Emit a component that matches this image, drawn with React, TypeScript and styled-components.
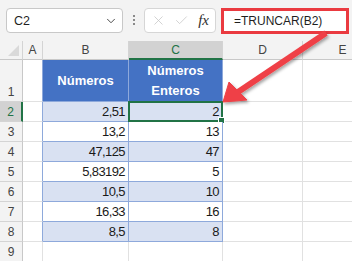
import React from 'react';
import styled, { createGlobalStyle } from 'styled-components';
import { ChevronDown, X, Check } from 'lucide-react';

const GlobalStyle = createGlobalStyle`
  html, body {
    margin: 0;
    padding: 0;
    background: #ffffff;
    overflow: hidden;
  }
  * {
    box-sizing: border-box;
  }
`;

const Page = styled.div`
  position: relative;
  width: 352px;
  height: 261px;
  overflow: hidden;
  font-family: 'Liberation Sans', Arial, sans-serif;
  background: #ffffff;
`;

const FormulaBar = styled.div`
  display: flex;
  align-items: flex-start;
  height: 41px;
  padding: 8px 0 0 6px;
  background: #f3f3f3;
`;

const NameBox = styled.div`
  display: flex;
  align-items: center;
  justify-content: space-between;
  width: 117px;
  height: 25px;
  padding: 0 4px 0 7px;
  background: #ffffff;
  border: 1px solid #c8c8c8;
  border-radius: 4px;
  font-size: 12.5px;
  color: #1f1f1f;
`;

const Grip = styled.div`
  display: flex;
  flex-direction: column;
  gap: 2px;
  margin: 7px 9px 0 10px;

  span {
    width: 2px;
    height: 2px;
    background: #8a8a8a;
  }
`;

const FxBox = styled.div`
  display: flex;
  align-items: center;
  width: 72px;
  height: 25px;
  padding: 0 6px 0 6px;
  gap: 8px;
  background: #ffffff;
  border: 1px solid #d6d6d6;
  border-radius: 4px;
`;

const Fx = styled.span`
  margin-left: auto;
  font-family: 'Liberation Serif', 'Times New Roman', serif;
  font-style: italic;
  font-size: 15px;
  color: #303030;
`;

const FormulaInput = styled.div`
  display: flex;
  align-items: center;
  width: 128px;
  height: 26px;
  margin-left: 5px;
  padding-left: 10px;
  background: #ffffff;
  border: 3px solid #ea3a40;
  font-size: 12px;
  color: #1f1f1f;
`;

const Sheet = styled.div`
  display: grid;
  grid-template-columns: 23px 20px 86px 94px 80px 80px;
  grid-template-rows: 19px 42px repeat(8, 20px);
`;

const ColHead = styled.div<{ $active?: boolean }>`
  display: flex;
  align-items: center;
  justify-content: center;
  font-size: 12px;
  color: ${(p) => (p.$active ? '#217346' : '#444444')};
  background: ${(p) => (p.$active ? '#d2d2d2' : '#f3f3f3')};
  border-right: 1px solid #d4d4d4;
  border-bottom: ${(p) => (p.$active ? '2px solid #217346' : '1px solid #c8c8c8')};
`;

const Corner = styled.div`
  position: relative;
  background: #f3f3f3;
  border-right: 1px solid #d4d4d4;
  border-bottom: 1px solid #c8c8c8;

  &::after {
    content: '';
    position: absolute;
    right: 3px;
    bottom: 3px;
    border-style: solid;
    border-width: 0 0 11px 11px;
    border-color: transparent transparent #d9d9d9 transparent;
  }
`;

const RowHead = styled.div<{ $active?: boolean }>`
  display: flex;
  align-items: flex-end;
  justify-content: center;
  padding-bottom: 2px;
  font-size: 12px;
  color: ${(p) => (p.$active ? '#217346' : '#444444')};
  background: ${(p) => (p.$active ? '#d2d2d2' : '#f3f3f3')};
  border-right: ${(p) => (p.$active ? '2px solid #217346' : '1px solid #c8c8c8')};
  border-bottom: 1px solid #d4d4d4;
`;

const Cell = styled.div<{ $edge?: boolean }>`
  border-right: 1px solid ${(p) => (p.$edge ? '#8ea9db' : '#e1e1e1')};
  border-bottom: 1px solid #e1e1e1;
`;

const HeaderCell = styled.div`
  display: flex;
  align-items: center;
  justify-content: center;
  text-align: center;
  line-height: 20px;
  font-size: 13px;
  font-weight: bold;
  color: #ffffff;
  background: #4472c4;
  border-right: 1px solid #8ea9db;
  border-bottom: 1px solid #8ea9db;
`;

const ValueCell = styled.div<{ $band: boolean; $selected?: boolean }>`
  position: relative;
  display: flex;
  align-items: flex-end;
  justify-content: flex-end;
  padding: 0 3px 2px 0;
  font-size: 13px;
  letter-spacing: -0.6px;
  color: #1a1a1a;
  background: ${(p) => (p.$band ? '#d9e1f2' : '#ffffff')};
  border-right: 1px solid #8ea9db;
  border-bottom: 1px solid #8ea9db;

  ${(p) =>
    p.$selected &&
    `
    &::before {
      content: '';
      position: absolute;
      inset: -1px -1px -1px -1px;
      border: 2px solid #217346;
    }
    &::after {
      content: '';
      position: absolute;
      right: -3px;
      bottom: -3px;
      width: 5px;
      height: 5px;
      background: #217346;
      border: 1px solid #ffffff;
    }
  `}
`;

const ArrowLayer = styled.svg`
  position: absolute;
  top: 0;
  left: 0;
  pointer-events: none;
`;

const COLS = ['A', 'B', 'C', 'D', 'E'];

const rows: { n: number; v: string }[] = [
  { n: 2.51, v: '2,51' },
  { n: 13.2, v: '13,2' },
  { n: 47.125, v: '47,125' },
  { n: 5.83192, v: '5,83192' },
  { n: 10.5, v: '10,5' },
  { n: 16.33, v: '16,33' },
  { n: 8.5, v: '8,5' },
];

const Arrow: React.FC = () => (
  <ArrowLayer width={352} height={261} viewBox="0 0 352 261">
    <defs>
      <filter id="arrowShadow" x="-20%" y="-20%" width="140%" height="140%">
        <feDropShadow dx="1.5" dy="2" stdDeviation="1.6" floodColor="#000" floodOpacity="0.35" />
      </filter>
    </defs>
    <g filter="url(#arrowShadow)" fill="#ef4146" stroke="#ef4146">
      <line x1={326} y1={33} x2={238} y2={92} strokeWidth={6} />
      <polygon points="223,102 229,82 247,100" strokeWidth={1} strokeLinejoin="round" />
    </g>
  </ArrowLayer>
);

export default function App() {
  return (
    <Page>
      <GlobalStyle />
      <FormulaBar>
        <NameBox>
          <span>C2</span>
          <ChevronDown size={14} strokeWidth={1.6} color="#404040" />
        </NameBox>
        <Grip>
          <span />
          <span />
          <span />
        </Grip>
        <FxBox>
          <X size={15} strokeWidth={1.2} color="#c4c4c4" />
          <Check size={15} strokeWidth={1.2} color="#c4c4c4" />
          <Fx>fx</Fx>
        </FxBox>
        <FormulaInput>=TRUNCAR(B2)</FormulaInput>
      </FormulaBar>

      <Sheet>
        <Corner />
        {COLS.map((c) => (
          <ColHead key={c} $active={c === 'C'}>
            {c}
          </ColHead>
        ))}

        <RowHead>1</RowHead>
        <Cell $edge />
        <HeaderCell>Números</HeaderCell>
        <HeaderCell>
          Números
          <br />
          Enteros
        </HeaderCell>
        <Cell />
        <Cell />

        {rows.map((r, i) => {
          const band = i % 2 === 0;
          return (
            <React.Fragment key={r.v}>
              <RowHead $active={i === 0}>{i + 2}</RowHead>
              <Cell $edge />
              <ValueCell $band={band}>{r.v}</ValueCell>
              <ValueCell $band={band} $selected={i === 0}>
                {Math.trunc(r.n)}
              </ValueCell>
              <Cell />
              <Cell />
            </React.Fragment>
          );
        })}

        <RowHead>9</RowHead>
        <Cell />
        <Cell />
        <Cell />
        <Cell />
        <Cell />
      </Sheet>

      <Arrow />
    </Page>
  );
}
